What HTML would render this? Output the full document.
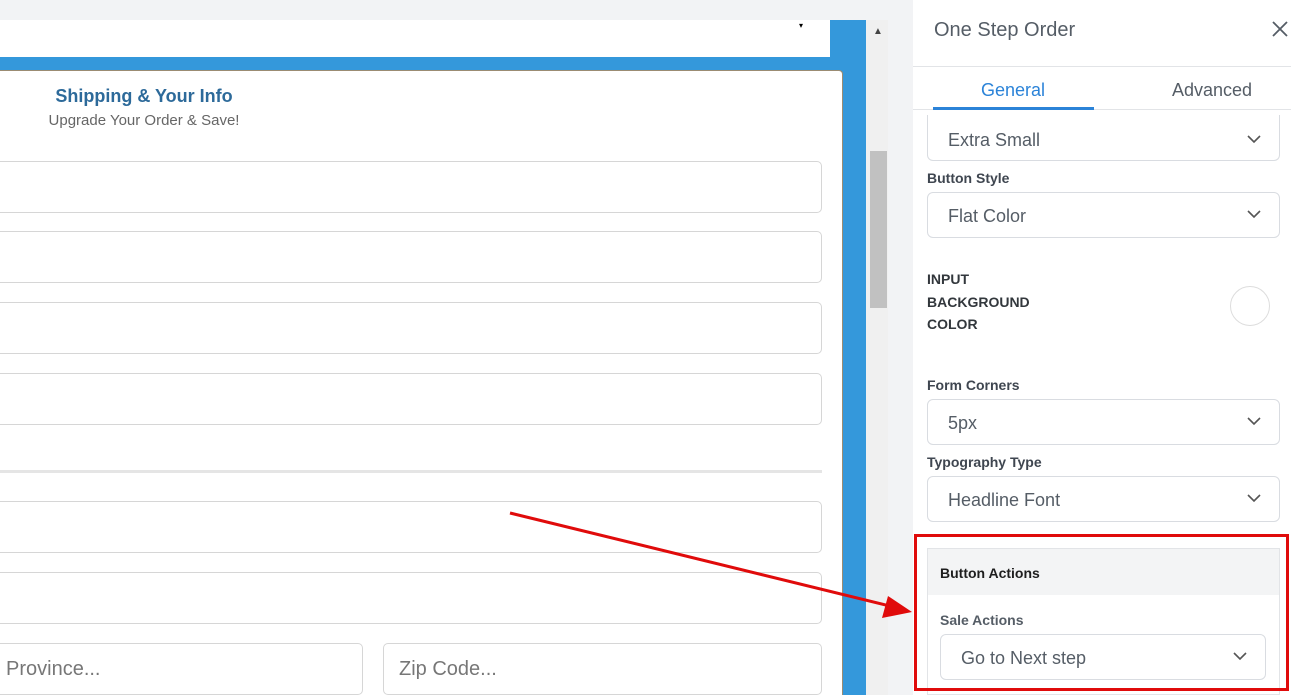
<!DOCTYPE html>
<html><head><style>
*{box-sizing:border-box;margin:0;padding:0}
body{width:1291px;height:695px;overflow:hidden;position:relative;background:#f2f3f5;font-family:"Liberation Sans",sans-serif}
.a{position:absolute}
.inp{position:absolute;background:#fff;border:1px solid #d6d6d6;border-radius:5px}
.sel{position:absolute;left:927px;width:353px;height:46px;border:1px solid #d9dce1;border-radius:6px;background:#fff;font-size:18px;color:#555d66;padding:13px 0 0 20px}
.sel svg{position:absolute;right:18px;top:17px}
.lbl{position:absolute;left:927px;font-size:14px;color:#3f4650;font-weight:bold}
</style></head><body>
<div class="a" style="left:0;top:20px;width:866px;height:675px;background:#3498db"></div>
<div class="a" style="left:0;top:20px;width:830px;height:37px;background:#fff"></div>
<div class="a" style="left:799px;top:21px;font-size:8px">▾</div>
<div class="a" style="left:0;top:70px;width:843px;height:625px;background:#fff;border:1px solid #9b8c73;border-left:none;border-bottom:none;border-radius:0 4px 0 0"></div>
<div class="a" style="left:0;top:86px;width:288px;text-align:center;font-size:18px;font-weight:bold;color:#2d6a9a">Shipping &amp; Your Info</div>
<div class="a" style="left:0;top:112px;width:288px;text-align:center;font-size:15px;color:#666">Upgrade Your Order &amp; Save!</div>
<div class="inp" style="left:-5px;top:161px;width:827px;height:52px"></div>
<div class="inp" style="left:-5px;top:231px;width:827px;height:52px"></div>
<div class="inp" style="left:-5px;top:302px;width:827px;height:52px"></div>
<div class="inp" style="left:-5px;top:373px;width:827px;height:52px"></div>
<div class="a" style="left:0;top:470px;width:822px;height:3px;background:#e5e5e5"></div>
<div class="inp" style="left:-5px;top:501px;width:827px;height:52px"></div>
<div class="inp" style="left:-5px;top:572px;width:827px;height:52px"></div>
<div class="inp" style="left:-5px;top:643px;width:368px;height:52px;font-size:20px;color:#777;padding:14px 0 0 10px">Province...</div>
<div class="inp" style="left:383px;top:643px;width:439px;height:52px;font-size:20px;color:#777;padding:14px 0 0 15px">Zip Code...</div>
<div class="a" style="left:866px;top:20px;width:22px;height:675px;background:#f0f0f0"></div>
<div class="a" style="left:873px;top:26px;font-size:10px;color:#444">▲</div>
<div class="a" style="left:870px;top:151px;width:17px;height:157px;background:#c1c1c1"></div>
<div class="a" style="left:913px;top:0;width:378px;height:695px;background:#fff"></div>
<div class="a" style="left:934px;top:19px;font-size:20px;color:#555d66">One Step Order</div>
<svg class="a" style="left:1272px;top:21px" width="16" height="16"><path d="M1 1L15 15M15 1L1 15" stroke="#555d66" stroke-width="1.8"/></svg>
<div class="a" style="left:913px;top:66px;width:378px;height:1px;background:#e2e4e7"></div>
<div class="a" style="left:913px;top:109px;width:378px;height:1px;background:#e2e4e7"></div>
<div class="a" style="left:933px;top:107px;width:161px;height:3px;background:#2b83d8"></div>
<div class="a" style="left:981px;top:80px;font-size:18px;color:#2b83d8">General</div>
<div class="a" style="left:1172px;top:80px;font-size:18px;color:#555d66">Advanced</div>
<div class="sel" style="top:115px;border-top:none;border-radius:0 0 6px 6px;padding-top:15px">Extra Small<svg width="14" height="9" style="top:20px"><path d="M1 1l6 6 6-6" stroke="#555" stroke-width="1.6" fill="none"/></svg></div>
<div class="lbl" style="top:170px">Button Style</div>
<div class="sel" style="top:192px">Flat Color<svg width="14" height="9"><path d="M1 1l6 6 6-6" stroke="#555" stroke-width="1.6" fill="none"/></svg></div>
<div class="lbl" style="top:268px;line-height:22.5px;color:#32373c">INPUT<br>BACKGROUND<br>COLOR</div>
<div class="a" style="left:1230px;top:286px;width:40px;height:40px;border:1px solid #ddd;border-radius:50%"></div>
<div class="lbl" style="top:377px">Form Corners</div>
<div class="sel" style="top:399px">5px<svg width="14" height="9"><path d="M1 1l6 6 6-6" stroke="#555" stroke-width="1.6" fill="none"/></svg></div>
<div class="lbl" style="top:454px">Typography Type</div>
<div class="sel" style="top:476px">Headline Font<svg width="14" height="9"><path d="M1 1l6 6 6-6" stroke="#555" stroke-width="1.6" fill="none"/></svg></div>
<div class="a" style="left:927px;top:548px;width:353px;height:147px;border:1px solid #e2e4e7;background:#fff"></div>
<div class="a" style="left:928px;top:549px;width:351px;height:46px;background:#f3f4f5"></div>
<div class="a" style="left:940px;top:565px;font-size:14px;font-weight:bold;color:#1e1e1e">Button Actions</div>
<div class="a" style="left:940px;top:612px;font-size:14px;font-weight:bold;color:#555d66">Sale Actions</div>
<div class="sel" style="left:940px;width:326px;top:634px">Go to Next step<svg width="14" height="9"><path d="M1 1l6 6 6-6" stroke="#555" stroke-width="1.6" fill="none"/></svg></div>
<div class="a" style="left:914px;top:534px;width:375px;height:157px;border:3px solid #e00b0b"></div>
<svg class="a" style="left:0;top:0" width="1291" height="695"><line x1="510" y1="513" x2="890" y2="606" stroke="#e00b0b" stroke-width="3"/><path d="M912 612L882 618 888 596Z" fill="#e00b0b"/></svg>
</body></html>
